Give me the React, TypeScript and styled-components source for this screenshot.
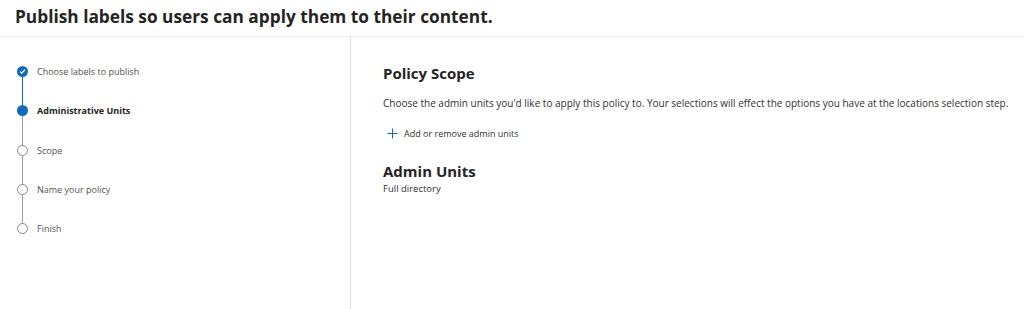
import React from 'react';
import styled, { createGlobalStyle } from 'styled-components';

const GlobalStyle = createGlobalStyle`
  html, body {
    margin: 0;
    padding: 0;
    background: #ffffff;
    font-family: "Open Sans", "Noto Sans", Arial, sans-serif;
    color: #323130;
  }
`;

const Page = styled.div`
  width: 1024px;
  height: 309px;
  display: flex;
  flex-direction: column;
  overflow: hidden;
`;

const Header = styled.div`
  height: 37px;
  box-sizing: border-box;
  padding: 5px 0 0 15px;
  border-bottom: 1px solid #edebe9;
  font-size: 17.3px;
  font-weight: 700;
  color: #252423;
`;

const Body = styled.div`
  flex: 1;
  display: flex;
`;

const Sidebar = styled.div`
  width: 351px;
  border-right: 1px solid #e1dfdd;
  padding: 29px 0 0 17px;
  box-sizing: border-box;
`;

const Step = styled.div<{ $active?: boolean }>`
  display: flex;
  align-items: center;
  height: 11px;
  gap: 9px;
  font-size: 9px;
  color: ${(p) => (p.$active ? '#252423' : '#545250')};
  font-weight: ${(p) => (p.$active ? 700 : 400)};
`;

const Dot = styled.span<{ $filled?: boolean }>`
  width: 11px;
  height: 11px;
  box-sizing: border-box;
  border-radius: 50%;
  flex-shrink: 0;
  display: flex;
  align-items: center;
  justify-content: center;
  background: ${(p) => (p.$filled ? '#0f6cbd' : '#fff')};
  border: ${(p) => (p.$filled ? 'none' : '1.3px solid #8a8886')};
`;

const Connector = styled.div<{ $done?: boolean }>`
  width: 1px;
  height: 28.3px;
  margin-left: 5px;
  background: ${(p) => (p.$done ? '#0f6cbd' : '#a19f9d')};
`;

const Main = styled.div`
  flex: 1;
  padding: 26px 0 0 32px;
`;

const SectionTitle = styled.div`
  font-size: 15px;
  font-weight: 700;
  color: #252423;
  line-height: 20px;
`;

const Desc = styled.div`
  margin-top: 13px;
  font-size: 10px;
  color: #323130;
  line-height: 14px;
`;

const AddButton = styled.div`
  display: flex;
  align-items: center;
  gap: 6px;
  margin: 17px 0 0 4px;
  font-size: 9px;
  color: #323130;
`;

const Units = styled.div`
  margin-top: 21px;
`;

const Sub = styled.div`
  font-size: 9.5px;
  color: #323130;
  line-height: 14px;
  margin-top: 1px;
`;

const steps = [
  { label: 'Choose labels to publish', state: 'done' },
  { label: 'Administrative Units', state: 'active' },
  { label: 'Scope', state: 'todo' },
  { label: 'Name your policy', state: 'todo' },
  { label: 'Finish', state: 'todo' },
];

export default function App() {
  return (
    <Page>
      <GlobalStyle />
      <Header>Publish labels so users can apply them to their content.</Header>
      <Body>
        <Sidebar>
          {steps.map((s, i) => (
            <React.Fragment key={s.label}>
              <Step $active={s.state === 'active'}>
                <Dot $filled={s.state !== 'todo'}>
                  {s.state === 'done' && (
                    <svg width="7" height="7" viewBox="0 0 8 8">
                      <path d="M1.2 4.2 L3.1 6 L6.8 2" stroke="#fff" strokeWidth="1.3" fill="none" />
                    </svg>
                  )}
                </Dot>
                {s.label}
              </Step>
              {i < steps.length - 1 && <Connector $done={s.state === 'done'} />}
            </React.Fragment>
          ))}
        </Sidebar>
        <Main>
          <SectionTitle>Policy Scope</SectionTitle>
          <Desc>
            Choose the admin units you'd like to apply this policy to. Your selections will effect the options you have at the locations selection step.
          </Desc>
          <AddButton>
            <svg width="11" height="11" viewBox="0 0 11 11">
              <path d="M5.5 0.5 V10.5 M0.5 5.5 H10.5" stroke="#0f6cbd" strokeWidth="1" />
            </svg>
            Add or remove admin units
          </AddButton>
          <Units>
            <SectionTitle>Admin Units</SectionTitle>
            <Sub>Full directory</Sub>
          </Units>
        </Main>
      </Body>
    </Page>
  );
}
